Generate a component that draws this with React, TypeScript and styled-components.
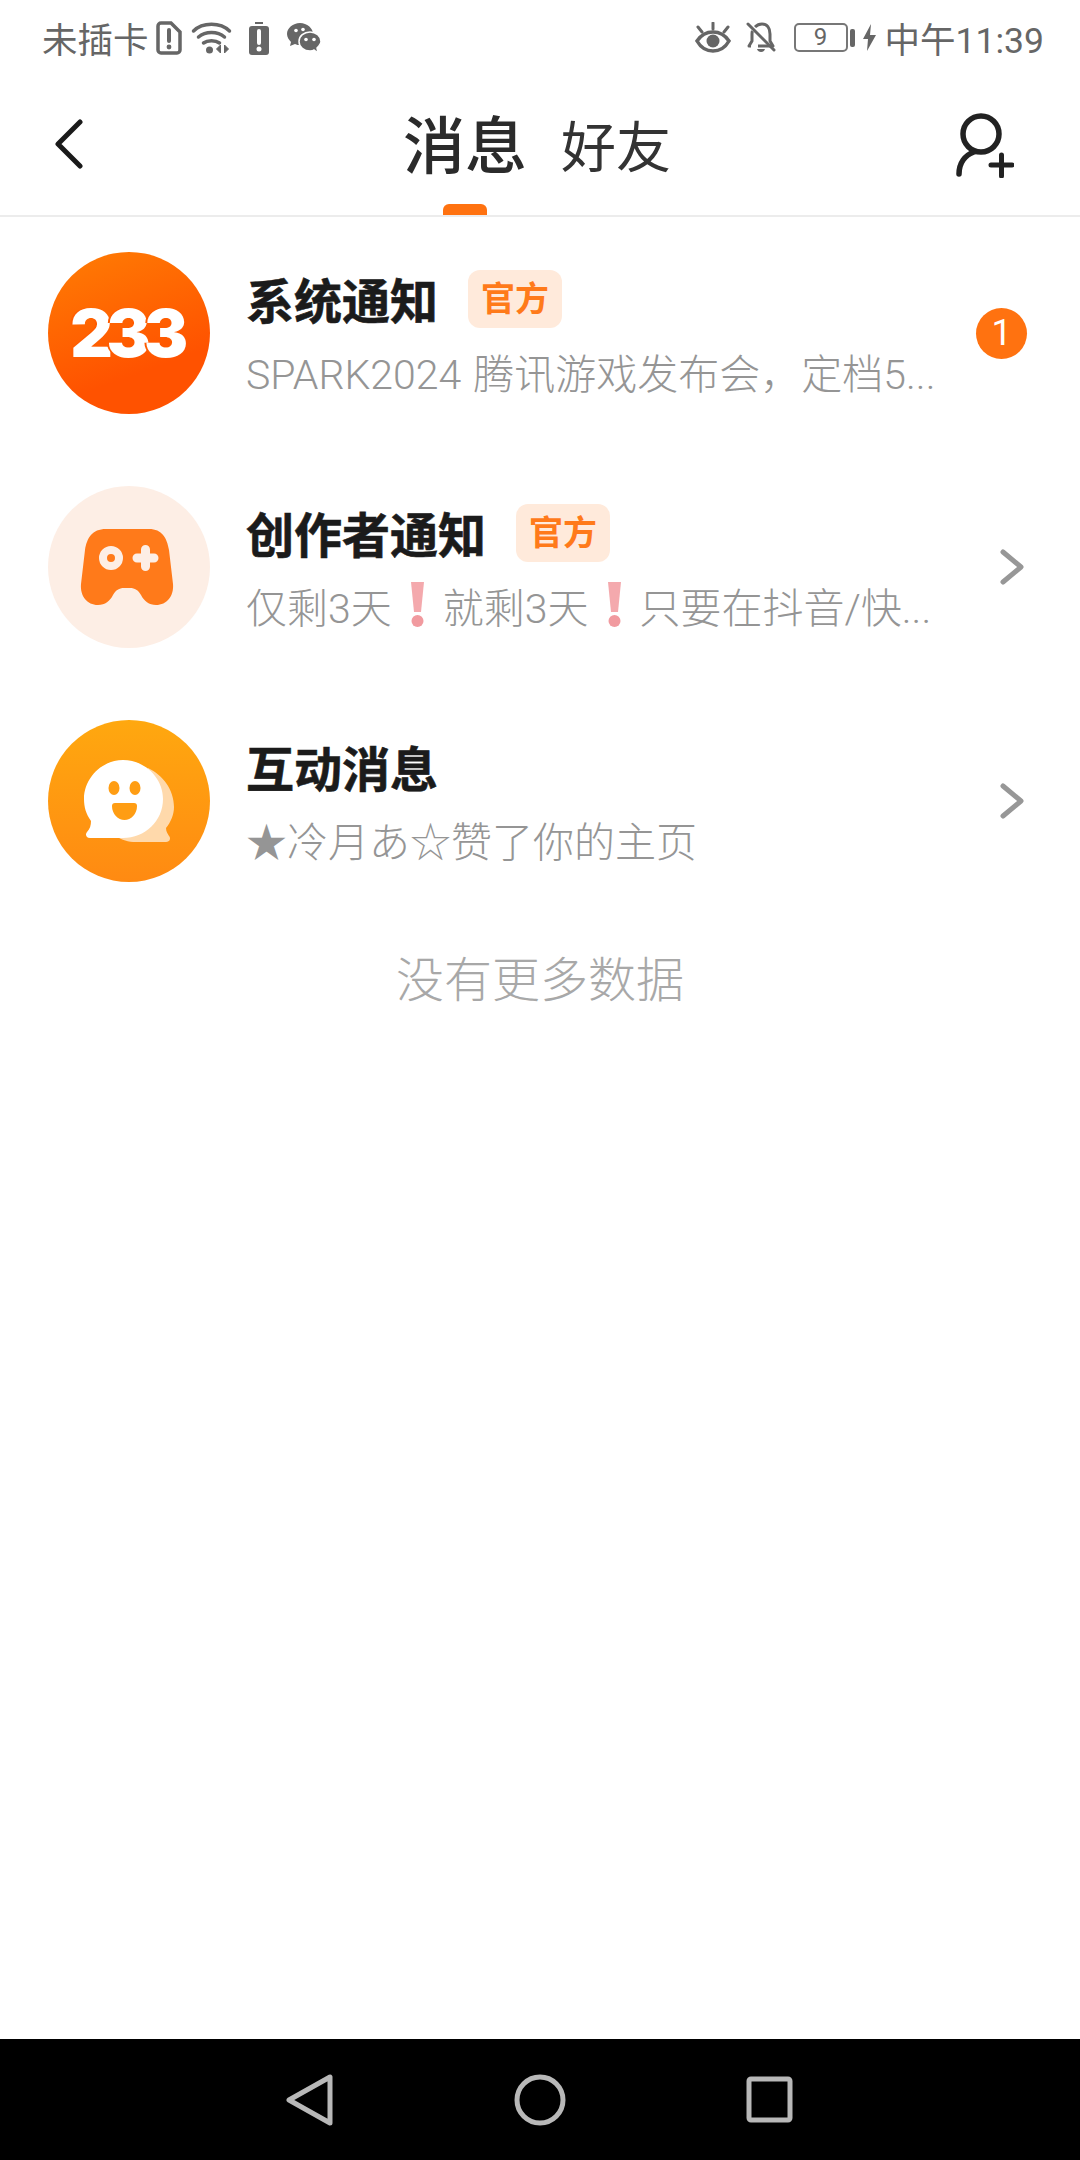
import * as React from 'react';
import styled, { createGlobalStyle } from 'styled-components';

const GlobalStyle = createGlobalStyle`
  html, body {
    margin: 0;
    padding: 0;
    background: #fff;
  }
  body {
    font-family: Roboto, "Noto Sans CJK SC", sans-serif;
  }
`;

const Page = styled.div`
  width: 1080px;
  height: 2160px;
  display: flex;
  flex-direction: column;
  overflow: hidden;
`;

const StatusBar = styled.div`
  height: 75px;
  flex: none;
  padding: 0 36px 0 42px;
  display: flex;
  align-items: center;
  justify-content: space-between;
  color: #666;
  font-size: 35.5px;
  box-sizing: border-box;
`;

const StatusGroup = styled.div`
  display: flex;
  align-items: center;
`;

const StatusIcon = styled.svg<{ $gap?: number }>`
  display: block;
  flex: none;
  margin-left: ${({ $gap }) => $gap ?? 0}px;
`;

const BatteryBox = styled.div`
  width: 54px;
  height: 29px;
  margin-left: 17px;
  box-sizing: border-box;
  border: 2px solid #777;
  border-radius: 5px;
  font-size: 24px;
  line-height: 25px;
  text-align: center;
`;

const BatteryCap = styled.div`
  width: 5px;
  height: 18px;
  margin-left: 2px;
  border-radius: 2px;
  background: #666;
`;

const Clock = styled.span`
  margin-left: 9px;
  white-space: nowrap;
`;

const Header = styled.div`
  height: 142px;
  flex: none;
  display: grid;
  grid-template-columns: 1fr auto 1fr;
  border-bottom: 2px solid #ececec;
  box-sizing: border-box;
`;

const BackButton = styled.div`
  padding: 44px 0 0 54px;
`;

const AddFriend = styled.div`
  display: flex;
  justify-content: flex-end;
  padding: 37px 66px 0 0;
`;

const Tabs = styled.div`
  display: flex;
  gap: 34px;
  margin-left: -6px;
`;

const Tab = styled.div<{ $active?: boolean }>`
  display: flex;
  flex-direction: column;
  align-items: center;
  color: ${({ $active }) => ($active ? '#2b2b2b' : '#333')};
  font-size: ${({ $active }) => ($active ? 62 : 55)}px;
  font-weight: ${({ $active }) => ($active ? 500 : 400)};
  line-height: 70px;
  padding-top: 38px;
`;

const TabMark = styled.div`
  width: 44px;
  height: 11px;
  margin-top: auto;
  border-radius: 6px 6px 0 0;
  background: #ff7210;
`;

const List = styled.div`
  display: flex;
  flex-direction: column;
  margin-top: -1px;
`;

const Row = styled.div`
  height: 234px;
  display: flex;
  align-items: center;
  padding: 0 56px 0 48px;
`;

const Avatar = styled.div<{ $bg: string }>`
  width: 162px;
  height: 162px;
  flex: none;
  border-radius: 50%;
  background: ${({ $bg }) => $bg};
  display: flex;
  align-items: center;
  justify-content: center;
`;

const LogoText = styled.span`
  font-family: Inter, sans-serif;
  font-weight: 900;
  font-size: 66px;
  line-height: 1;
  letter-spacing: -6.5px;
  margin-right: 6px;
  color: #fff;
`;

const LogoDigit = styled.span`
  text-shadow: -2px 0 0 #ff5c00;
`;

const RowBody = styled.div`
  flex: 1;
  min-width: 0;
  margin-left: 36px;
  padding-bottom: 2px;
`;

const TitleLine = styled.div`
  display: flex;
  align-items: center;
  height: 60px;
`;

const Title = styled.span`
  font-size: 48px;
  font-weight: 700;
  color: #1b1b1b;
  -webkit-text-stroke: 0.6px #1b1b1b;
`;

const OfficialTag = styled.span`
  width: 94px;
  height: 58px;
  margin: 1px 0 0 30px;
  border-radius: 12px;
  background: #ffeadb;
  color: #ff7a1a;
  font-size: 34px;
  font-weight: 700;
  line-height: 58px;
  text-align: center;
`;

const Subtitle = styled.div`
  margin-top: 18px;
  height: 50px;
  display: flex;
  align-items: center;
  font-size: 41px;
  font-weight: 300;
  word-spacing: 2px;
  color: #959595;
  white-space: nowrap;
`;

const Badge = styled.div`
  width: 51px;
  height: 51px;
  flex: none;
  border-radius: 50%;
  background: #ff7210;
  color: #fff;
  font-size: 36px;
  line-height: 51px;
  text-align: center;
  margin-right: -3px;
`;

const EndOfList = styled.div`
  height: 116px;
  display: flex;
  align-items: center;
  justify-content: center;
  font-size: 48px;
  font-weight: 300;
  color: #a8a8a8;
`;

const Spacer = styled.div`
  flex: 1;
`;

const NavBar = styled.div`
  height: 121px;
  flex: none;
  background: #000;
  display: flex;
  align-items: center;
  justify-content: center;
  gap: 180px;
  padding-right: 3px;
`;

const Bang = () => (
  <svg width="51" height="50" viewBox="0 0 51 50">
    <path d="M19 2h13l-3 30h-7z" fill="#f4a9ad" />
    <circle cx="25.500" cy="41" r="6" fill="#f19a9f" />
  </svg>
);

const Chevron = () => (
  <svg width="24" height="36" viewBox="0 0 24 36" fill="none" stroke="#979797" strokeWidth="5" strokeLinecap="round" strokeLinejoin="round">
    <path d="M3 3l18 15L3 33" />
  </svg>
);

const GameIcon = () => (
  <svg width="162" height="162" viewBox="0 0 162 162">
    <path
      d="M58 43h43c13 0 18 9 20 21l4 34c1 12-6 21-17 21-7 0-12-4-15-10-3-5-6-7-11-7h-6c-5 0-8 2-11 7-3 6-8 10-15 10-11 0-18-9-17-21l4-34c2-12 7-21 21-21z"
      fill="#ff7a1a"
    />
    <circle cx="63" cy="72" r="8" fill="#ff7a1a" stroke="#fdeee5" strokeWidth="8" />
    <path d="M89 72h17M97.500 63.500v17" stroke="#fdeee5" strokeWidth="9" strokeLinecap="round" />
  </svg>
);

const ChatIcon = () => (
  <svg width="162" height="162" viewBox="0 0 162 162">
    <path
      d="M100 48c15 7 26 22 26 39 0 7-3 15-8 21 0 4 2 6 3 8 2 2 1 6-3 6H88c-8 0-14-2-20-6z"
      fill="#ffd9ab"
    />
    <path
      d="M75 40c22 0 40 18 40 39 0 22-18 39-40 39H42c-4 0-5-4-3-6 3-3 4-7 4-11-5-7-7-14-7-22 0-21 18-39 39-39z"
      fill="#fff"
    />
    <ellipse cx="66" cy="68" rx="5.500" ry="7" fill="#ff9d13" />
    <ellipse cx="87" cy="68" rx="5.500" ry="7" fill="#ff9d13" />
    <path d="M67 83h19c2 0 3 1 3 3 0 8-6 14-12.500 14S64 94 64 86c0-2 1-3 3-3z" fill="#ff9d13" />
  </svg>
);

const App = () => (
  <Page>
    <GlobalStyle />
    <StatusBar>
      <StatusGroup>
        <span>未插卡</span>
        <StatusIcon $gap={7} width="26" height="34" viewBox="0 0 26 34">
          <path d="M5 2h10l9 9v18a3 3 0 0 1-3 3H5a3 3 0 0 1-3-3V5a3 3 0 0 1 3-3z" fill="none" stroke="#666" strokeWidth="3.500" />
          <path d="M13 9v11" stroke="#666" strokeWidth="4" strokeLinecap="round" />
          <circle cx="13" cy="26" r="2.400" fill="#666" />
        </StatusIcon>
        <StatusIcon $gap={9} width="41" height="33" viewBox="0 0 40 33">
          <g fill="none" stroke="#666" strokeWidth="3.500" strokeLinecap="round">
            <path d="M2 10C11 1 29 1 38 10" />
            <path d="M7 16c7-6 19-6 26 0" />
            <path d="M12 22c4-3 12-3 16 0" />
          </g>
          <circle cx="18" cy="29" r="3.500" fill="#666" />
          <path d="M29 24v8l-4-4zM33 24v8l4-4z" fill="#666" stroke="#666" />
        </StatusIcon>
        <StatusIcon $gap={17} width="20" height="34" viewBox="0 0 20 34">
          <path d="M6 1h8v2H6z" fill="#666" />
          <rect x="0" y="5" width="20" height="29" rx="3" fill="#666" />
          <path d="M10 10v12" stroke="#fff" strokeWidth="4" strokeLinecap="round" />
          <circle cx="10" cy="28" r="2.500" fill="#fff" />
        </StatusIcon>
        <StatusIcon $gap={18} width="34" height="30" viewBox="0 0 34 30">
          <path d="M13 0C6 0 0 5 0 11c0 3 2 6 4 8l-1 4 5-2c2 1 3 1 5 1 7 0 13-5 13-11S20 0 13 0z" fill="#666" />
          <path d="M23 9c-6 0-11 4-11 9.500S17 28 23 28c1 0 3 0 4-1l4 3-1-5c2-2 4-4 4-6.500C34 13 29 9 23 9z" fill="#666" stroke="#fff" strokeWidth="1.500" />
          <circle cx="9" cy="7.500" r="1.800" fill="#fff" />
          <circle cx="16" cy="6.500" r="1.800" fill="#fff" />
          <circle cx="19" cy="16.500" r="1.800" fill="#fff" />
          <circle cx="27" cy="16.500" r="1.800" fill="#fff" />
        </StatusIcon>
      </StatusGroup>
      <StatusGroup>
        <StatusIcon width="36" height="32" viewBox="0 0 36 32">
          <path d="M2 19c4-6 9-9 16-9s12 3 16 9c-4 7-9 10-16 10S6 26 2 19z" fill="none" stroke="#666" strokeWidth="3.500" />
          <circle cx="18" cy="19" r="6.500" fill="#666" />
          <path d="M18 1v6M3 5l4 5M33 5l-4 5" stroke="#666" strokeWidth="3" strokeLinecap="round" />
        </StatusIcon>
        <StatusIcon $gap={14} width="32" height="33" viewBox="0 0 32 33">
          <path d="M10 6c2-2 4-3 7-3 5 0 8 4 8 10v7l3 5H13M6 25H4l3-5v-7c0-1 0-2 .5-3" fill="none" stroke="#666" strokeWidth="3" strokeLinejoin="round" />
          <path d="M3 3l26 26" stroke="#666" strokeWidth="3" strokeLinecap="round" />
          <path d="M12 28c1 4 7 4 8 0z" fill="#666" />
        </StatusIcon>
        <BatteryBox>9</BatteryBox>
        <BatteryCap />
        <StatusIcon $gap={8} width="13" height="27" viewBox="0 0 13 27">
          <path d="M8 0L0 15h5l-1 12 9-16H7z" fill="#666" />
        </StatusIcon>
        <Clock>中午11:39</Clock>
      </StatusGroup>
    </StatusBar>

    <Header>
      <BackButton>
        <svg width="30" height="50" viewBox="0 0 30 50" fill="none" stroke="#1a1a1a" strokeWidth="5" strokeLinecap="round" strokeLinejoin="round">
          <path d="M26 3L4 25l22 22" />
        </svg>
      </BackButton>
      <Tabs>
        <Tab $active>
          消息
          <TabMark />
        </Tab>
        <Tab>好友</Tab>
      </Tabs>
      <AddFriend>
        <svg width="58" height="66" viewBox="0 0 58 66" fill="none" stroke="#222" strokeLinecap="round">
          <circle cx="25" cy="22" r="18" strokeWidth="5.500" />
          <path d="M3 62c0-11 6-19 15-22" strokeWidth="5.500" />
          <path d="M35 53h21M45.500 43v21" strokeWidth="5" />
        </svg>
      </AddFriend>
    </Header>

    <List>
      <Row>
        <Avatar $bg="linear-gradient(160deg, #ff7d04, #ff5200 70%)">
          <LogoText>
            <LogoDigit>2</LogoDigit>
            <LogoDigit>3</LogoDigit>
            <LogoDigit>3</LogoDigit>
          </LogoText>
        </Avatar>
        <RowBody>
          <TitleLine>
            <Title>系统通知</Title>
            <OfficialTag>官方</OfficialTag>
          </TitleLine>
          <Subtitle>SPARK2024 腾讯游戏发布会，定档5...</Subtitle>
        </RowBody>
        <Badge>1</Badge>
      </Row>
      <Row>
        <Avatar $bg="#fdeee5">
          <GameIcon />
        </Avatar>
        <RowBody>
          <TitleLine>
            <Title>创作者通知</Title>
            <OfficialTag>官方</OfficialTag>
          </TitleLine>
          <Subtitle>
            仅剩3天
            <Bang />
            就剩3天
            <Bang />
            只要在抖音/快...
          </Subtitle>
        </RowBody>
        <Chevron />
      </Row>
      <Row>
        <Avatar $bg="linear-gradient(180deg, #ffa80f, #ff8a12)">
          <ChatIcon />
        </Avatar>
        <RowBody>
          <TitleLine>
            <Title>互动消息</Title>
          </TitleLine>
          <Subtitle>★冷月あ☆赞了你的主页</Subtitle>
        </RowBody>
        <Chevron />
      </Row>
    </List>
    <EndOfList>没有更多数据</EndOfList>
    <Spacer />
    <NavBar>
      <svg width="50" height="52" viewBox="0 0 50 52" fill="none" stroke="#b8b8b8" strokeWidth="5" strokeLinejoin="round">
        <path d="M46 3v46L5 26z" />
      </svg>
      <svg width="52" height="52" viewBox="0 0 52 52" fill="none" stroke="#b8b8b8" strokeWidth="5">
        <circle cx="26" cy="26" r="23" />
      </svg>
      <svg width="48" height="48" viewBox="0 0 48 48" fill="none" stroke="#b8b8b8" strokeWidth="5" strokeLinejoin="round">
        <rect x="3" y="3" width="41" height="41" rx="2" />
      </svg>
    </NavBar>
  </Page>
);

export default App;
